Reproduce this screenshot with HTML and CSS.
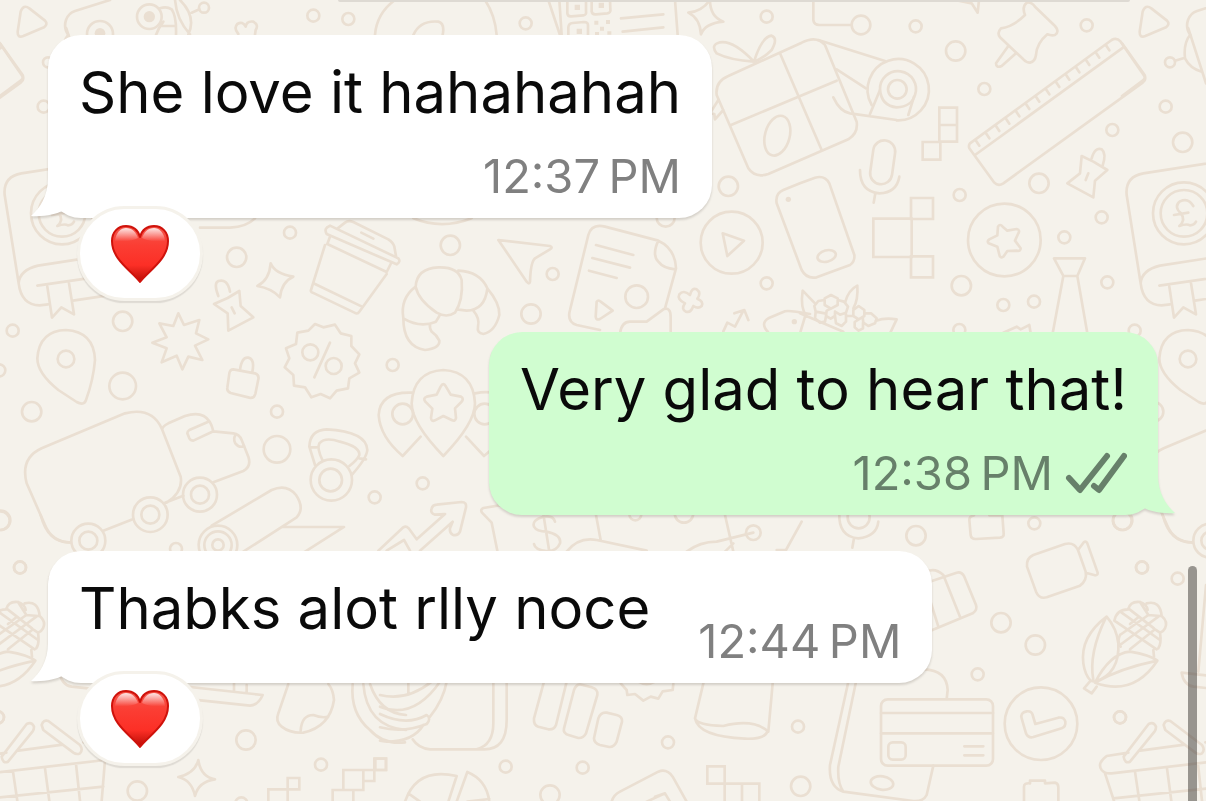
FILE: index.html
```html
<!DOCTYPE html>
<html lang="en">
<head>
<meta charset="utf-8">
<meta name="viewport" content="width=device-width, initial-scale=1">
<title>Chat</title>
<link rel="stylesheet" href="styles.css">
</head>
<body>
<svg class="wallpaper" viewBox="0 0 1206 801" preserveAspectRatio="xMinYMin slice" aria-hidden="true">
  <defs>
    <g id="doodles">
      <!-- top left -->
      <g transform="scale(.33333)">
        <path d="M62 35Q70 12 88 25L135 62Q145 72 132 82L70 108Q52 115 53 95Z"/>
        <path d="M205 105Q190 85 198 60Q205 40 225 33L330 0M0 130L68 225Q72 235 62 242L0 288"/>
        <circle cx="300" cy="102" r="39"/><circle class="dot" cx="300" cy="100" r="16"/>
        <circle cx="448" cy="50" r="37"/><circle class="dot" cx="448" cy="50" r="17"/>
        <path d="M480 25Q500 18 515 28Q530 50 528 105M482 78H525M468 105Q475 85 490 65M525 0Q530 60 570 103M540 0Q590 50 565 103M575 38L598 28"/>
        <circle cx="612" cy="23" r="15"/>
        <path d="M715 102Q700 85 712 72Q728 62 737 80Q740 62 760 65Q777 75 767 90L765 104"/>
        <circle cx="940" cy="47" r="18"/><circle cx="1045" cy="57" r="18"/>
        <circle cx="144" cy="187" r="15"/><circle cx="131" cy="320" r="18"/><circle cx="182" cy="427" r="29"/>
        <path d="M1125 105Q1130 40 1185 0M159 182L189 173M204 105Q184 130 189 175Q204 205 239 215M199 85L252 250M600 683H690Q740 680 765 655"/>
        <circle cx="870" cy="698" r="18"/><circle cx="710" cy="772" r="29"/>
        <path d="M812 790Q825 822 880 830Q845 845 840 892Q815 865 772 858Q808 840 812 790Z"/>
      </g>
      <!-- top middle -->
      <g transform="translate(400) scale(.33333)">
        <path d="M40 105Q60 60 115 65Q135 70 128 105M255 0Q285 45 290 105M445 0L480 105M478 0L485 105M663 55L790 43M668 95L790 82M825 0L833 105"/>
        <path d="M502 0V40Q503 50 514 49L550 46Q560 45 558 33V0M575 0V34Q576 44 588 43L622 40Q633 38 631 28L630 0M505 105V82Q506 70 518 69L552 66Q565 66 564 78V105"/>
        <path class="dot" d="M524 14h16v16h-16zM596 8h16v16h-16zM530 86h16v16h-16zM583 62h12v12h-12zM618 60h12v12h-12zM600 80h12v12h-12zM585 96h12v10h-12zM622 94h12v10h-12z"/>
        <path d="M930 0Q930 50 970 65Q915 70 903 103Q900 55 865 38Q905 35 930 0Z"/>
        <circle cx="377" cy="70" r="18"/><circle cx="1100" cy="50" r="18"/>
        <path d="M1062 185Q1000 120 960 127Q930 135 950 160Q990 180 1062 185Q1085 110 1115 107Q1135 115 1115 150Q1090 175 1062 185Z"/>
        <path d="M1045 505L950 285Q945 245 985 228L1205 128Q1250 105 1275 135L1370 365Q1375 400 1345 418L1105 522Q1065 535 1045 505ZM993 375L1310 242M1140 160L1265 450M955 300L930 340L943 342L945 358L970 330"/>
        <ellipse cx="1132" cy="407" rx="37" ry="61" transform="rotate(15 1132 407)"/>
        <circle cx="985" cy="559" r="29"/><circle cx="151" cy="736" r="29"/><circle cx="458" cy="822" r="18"/>
        <circle cx="393" cy="942" r="29"/><circle cx="1100" cy="850" r="18"/><circle cx="797" cy="653" r="27"/>
        <circle cx="995" cy="728" r="93"/><path d="M968 700L1032 722L982 768Z"/>
        <path d="M295 720L450 738Q460 742 450 748L405 775Q392 785 390 845Q388 855 380 845Z"/>
        <path d="M40 655Q125 690 215 655"/>
        <path d="M600 990L530 975Q500 965 510 930L565 705Q575 670 615 680L775 722Q825 745 828 805L795 925M775 722Q755 765 775 785Q790 805 825 808M588 735L700 765M577 774L690 803M567 812L650 834"/>
        <circle cx="710" cy="890" r="34"/><path d="M590 905Q595 898 602 905L638 932L600 957Q588 962 587 950Z"/>
        <path d="M660 1000Q665 965 690 965H740L790 928Q812 920 812 950V1000"/>
        <path d="M870 885Q875 862 890 868Q905 878 892 896Q912 905 905 918Q895 928 880 918Q872 940 858 935Q842 928 855 910Q830 898 838 883Q850 868 870 885Z"/>
        <path d="M970 994L982 968L1005 980L1030 932M1003 940L1033 930L1045 960M1104 996Q1080 970 1105 955L1155 934Q1165 930 1230 942"/>
        <circle class="dot" cx="1183" cy="965" r="8"/>
      </g>
      <!-- top right -->
      <g transform="translate(800) scale(.33333)">
        <path d="M40 0V60Q42 75 58 75H155M55 120L255 183M110 208L198 265M100 292Q120 335 150 340L290 360M240 270L210 342M342 290L325 345"/>
        <path d="M215 315A92 92 0 1 1 290 361"/><path d="M240 270A54 54 0 1 1 345 285Q335 320 290 322Q245 318 240 270Z"/><circle cx="292" cy="268" r="28"/>
        <circle cx="183" cy="75" r="28"/><circle cx="347" cy="79" r="18"/><circle cx="467" cy="153" r="29"/>
        <circle cx="553" cy="267" r="18"/><circle cx="860" cy="76" r="18"/><path d="M465 0L515 10L533 38L537 0"/>
        <path d="M675 45Q665 20 680 8Q695 5 705 20L765 78Q780 95 765 105Q755 108 742 103Q710 130 708 165Q705 185 690 188Q680 188 670 178L600 112Q590 98 603 85Q640 80 675 45ZM625 138L588 190Q588 205 605 198L648 160"/>
        <path d="M510 430L935 120Q950 112 962 125L1033 228Q1040 240 1028 248L610 550Q595 560 583 548L508 445Q505 437 510 430ZM525 465L970 142"/>
        <path d="M528 422l10 15m20-37l10 15m20-37l10 15m20-37l10 15m20-37l10 15m20-37l10 15m20-37l10 15m20-37l10 15m20-37l10 15m20-37l10 15m20-37l10 15m20-37l10 15m20-37l10 15m20-37l10 15"/>
        <path class="sharp" d="M418 323h53v102h-53zM418 375h53M368 426h53v53h-53zM333 594h66v63h-66zM220 656h115v115h-115zM333 769h66v63h-66z"/>
        <rect x="215" y="421" width="66" height="132" rx="33" transform="rotate(8 248 487)"/>
        <path d="M180 510Q180 575 238 580Q290 578 298 530M226 580L221 608"/>
        <path d="M0 550L45 533Q75 525 88 550L163 765Q165 785 150 795L50 832Q20 838 5 810L-70 610Q-75 580 -50 570Z"/>
        <ellipse cx="80" cy="768" rx="28" ry="17" transform="rotate(-15 80 768)"/><circle class="dot" cx="-35" cy="598" r="8"/>
        <circle cx="613" cy="720" r="109"/>
        <path d="M594 680Q600 670 608 680L622 692L650 687Q662 690 654 702L645 722L662 745Q662 755 650 752L622 753L610 770Q600 776 598 764L592 740L566 730Q560 724 568 718L592 706Z"/>
        <circle cx="479" cy="585" r="18"/><circle cx="717" cy="550" r="29"/><circle cx="937" cy="390" r="18"/>
        <circle cx="905" cy="652" r="18"/><circle cx="793" cy="712" r="18"/><circle cx="922" cy="847" r="18"/>
        <circle cx="484" cy="857" r="29"/><circle cx="610" cy="915" r="18"/><circle cx="702" cy="905" r="18"/><circle cx="478" cy="990" r="18"/>
        <path d="M845 468L880 485L922 510L885 542L880 592L802 550L840 520ZM875 475Q885 440 905 448Q920 460 908 497M865 520L857 540"/>
        <path d="M762 775H855L832 828H790ZM790 828L758 1000M832 828L862 1000M610 998L650 980L662 988L688 975L692 1000"/>
        <!-- flowers -->
        <path d="M45 910L8 872Q0 925 20 950M135 908Q145 870 172 857Q175 900 160 925M228 962Q255 952 290 958L270 1000M0 940L130 995M15 950L0 1000"/>
        <path d="M93 885L113 895V915L93 926L74 915V895ZM74 900L55 903L43 918L47 935L75 940M113 900L132 905L144 920L138 938L120 944L105 935M93 926L80 932L78 948L92 956L105 948V935M47 935L45 955L60 968L75 965L78 948M105 948L108 970L125 978L138 965V942M176 918L193 930V948L176 958L160 948V930ZM138 948L160 948M193 940L213 940L230 955L225 970L205 978L190 968L188 952M176 958L164 966V982L176 992L189 985V968"/>
        <!-- ledger -->
        <path d="M1290 480L1030 520Q975 530 980 585L1022 850Q1030 915 1085 916L1110 913M1240 772L1080 797Q1025 810 1022 850M1078 857L1290 826M1108 860L1122 953L1150 922L1188 943L1173 850M1185 902L1290 886"/>
        <circle cx="1152" cy="640" r="93"/><circle cx="1152" cy="640" r="70"/>
        <path d="M1180 618Q1165 592 1140 604Q1120 620 1143 640Q1158 660 1138 678Q1160 670 1170 676Q1182 676 1188 665M1122 645L1165 638"/>
      </g>
      <!-- left -->
      <g transform="translate(0 290) scale(.33333)">
        <circle cx="368" cy="94" r="29"/><circle cx="38" cy="122" r="18"/><circle cx="-2" cy="241" r="18"/><circle cx="368" cy="288" r="40"/>
        <circle cx="95" cy="365" r="29"/><circle cx="831" cy="365" r="18"/><circle cx="831" cy="478" r="40"/><circle cx="2" cy="691" r="29"/><circle cx="528" cy="777" r="18"/><circle cx="60" cy="832" r="18"/>
        <path d="M230 336L175 300Q112 250 112 205Q118 122 198 120Q282 125 285 210Q280 270 258 330Q252 348 230 336Z"/><circle cx="198" cy="207" r="25"/>
        <path d="M535 70L552 105L598 90L588 130L625 148L585 167L607 210L565 200L547 238L530 197L485 217L500 175L457 158L500 142L478 100L520 108Z"/>
        <path d="M700 238L765 250Q778 255 775 268L766 312Q762 326 748 323L692 309Q680 304 682 293L688 250Q690 238 700 238ZM720 240Q725 200 745 203Q765 208 757 245"/>
        <path d="M642 42L683 24L718 3L722 48L760 82L685 122L683 70ZM655 18Q640-20 655-27Q682-35 690 5M695 52L704 70"/>
        <path d="M375 370L125 475Q60 505 80 580L135 705Q155 755 212 758M375 370Q455 350 485 415L542 560Q550 605 500 638M310 722L400 687M495 638L550 617M640 577L730 543Q755 530 745 500L725 450Q718 432 700 430L640 424Q625 355 555 378L505 400Q485 410 487 420M640 424L580 452Q572 452 568 445L562 430Q562 424 568 420L625 395"/>
        <path d="M708 433Q698 445 706 460Q718 475 732 468"/>
        <circle cx="600" cy="614" r="51"/><circle cx="600" cy="614" r="27"/><circle cx="451" cy="674" r="52"/><circle cx="451" cy="674" r="27"/><circle cx="265" cy="752" r="51"/><circle cx="265" cy="752" r="27"/>
        <path d="M635 707L815 600Q860 580 888 615Q915 655 890 682L730 785M850 711H1032L900 795"/>
        <circle cx="654" cy="765" r="58"/><circle cx="654" cy="765" r="41"/><circle cx="654" cy="765" r="17"/>
      </g>
      <!-- centre left -->
      <g transform="translate(270 210) scale(.33333)">
        <circle cx="368" cy="465" r="18"/><circle cx="314" cy="862" r="18"/><circle cx="458" cy="820" r="18"/><circle cx="690" cy="443" r="25"/>
        <path d="M180 47L385 145Q393 155 380 163L170 72Q160 55 180 47ZM203 55L225 38Q235 30 250 36L355 88Q370 98 373 110L378 138M274 68L310 86M180 80L172 102L350 186L362 162M165 105L123 240Q121 246 128 248L258 310Q264 312 268 305L350 192M135 222L276 290"/>
        <path d="M437 230Q440 175 505 172Q565 170 575 210Q580 270 555 308Q530 325 500 308Q445 270 437 230ZM437 230Q390 265 400 325Q450 355 498 335L508 318M400 325Q400 410 465 420Q510 415 508 392Q500 375 485 365Q478 355 480 342M565 182Q630 185 652 235Q645 300 590 302L560 298M652 235Q690 280 688 315Q675 365 640 372Q620 370 624 350Q630 325 610 302"/>
        <path d="M135 342L160 352L195 344L212 370L244 378V408L268 433L255 460L268 488L238 505L234 535L200 542L180 565L152 552L124 562L105 532L72 527L70 495L44 472L58 445L48 415L78 402L82 368L115 362Z"/>
        <circle cx="121" cy="427" r="24"/><circle cx="191" cy="468" r="24"/><path d="M180 398L133 502"/>
        <path d="M520 738Q425 640 425 580Q430 485 520 480Q610 485 615 580Q615 640 520 738ZM425 548Q330 545 326 615Q330 680 398 738L452 680M615 550Q710 530 715 615Q715 680 642 738L588 680"/>
        <path d="M512 530Q520 515 528 530L542 554L573 560Q583 566 574 576L555 595L558 624Q556 636 545 630L520 618L495 631Q484 636 483 624L487 596L466 575Q458 564 470 560L500 554Z"/>
        <circle cx="398" cy="612" r="31"/><circle cx="644" cy="612" r="31"/>
        <circle cx="184" cy="810" r="62"/><circle cx="182" cy="810" r="34"/>
        <path d="M135 765L118 710Q120 660 170 658Q290 665 292 720Q290 745 245 795M158 752Q140 715 148 700Q165 680 210 695Q270 710 268 735Q262 750 238 768M120 712L140 712M268 745L288 748"/>
        <path d="M325 1022L400 952Q408 946 416 955L440 988L525 912L495 914Q480 910 485 895Q488 885 500 884L575 876Q590 876 588 892L570 965Q562 980 548 974Q538 968 540 955L548 935L450 1022M350 1022L402 990L420 1022"/>
        <path d="M702 884L640 894Q630 898 636 908L665 938L682 1022"/>
      </g>
      <!-- bottom left -->
      <g transform="translate(0 540) scale(.33333)">
        <path d="M179 398L788 465Q775 495 750 497L215 440Q185 435 179 398ZM252 135L229 395M702 430V452M740 435V456"/>
        <path d="M865 432L835 520Q825 545 845 560Q870 580 910 578Q990 560 1002 480Q1000 450 985 432M902 572Q905 525 940 525Q965 535 985 530"/>
        <circle cx="738" cy="600" r="29"/><circle cx="963" cy="674" r="18"/><circle cx="412" cy="753" r="29"/><circle cx="-6" cy="532" r="18"/><circle cx="724" cy="790" r="18"/>
        <path d="M595 660Q602 710 645 718Q595 725 585 768Q575 720 535 711Q585 700 595 660Z"/>
        <path class="sharp" d="M805 783V748H863V783M863 714h35v34h-35zM1030 690h60v60h-60zM1090 690h33v33h-33zM1123 656h35v34h-35zM998 783V750H1060V783"/>
        <path d="M1058 432Q1050 520 1110 570Q1150 615 1215 607M1090 432Q1100 560 1218 570M1110 432Q1140 520 1218 525"/>
        <!-- basket -->
        <path d="M5 650L80 552Q95 545 102 560Q102 568 98 574L24 665Q8 672 5 650ZM125 555Q130 538 145 543L240 615Q250 630 240 640Q230 645 220 638L130 570ZM55 632L188 614M19 638L-46 648Q-76 670 -61 690Q-51 702 -31 700L315 660L305 783M-51 700L-24 783M39 695L52 783M135 685L148 783M228 672L240 783M-26 775L310 740M250 607L310 598Q330 620 315 660"/>
      </g>
      <!-- bottom centre -->
      <g transform="translate(380 500) scale(.33333)">
        <path d="M525 65Q520 45 490 50Q455 60 462 80Q470 95 500 95Q545 105 540 130Q530 155 500 153Q465 150 462 132M490 42L508 155M648 45L662 120M560 155Q595 110 650 120L800 152M920 155Q960 125 1010 125L1120 98M1035 45L1060 155M1060 130L1035 155M1265 65L1218 150H1190"/>
        <circle cx="1120" cy="98" r="22"/><circle cx="766" cy="43" r="18"/><circle cx="912" cy="40" r="28"/>
        <path d="M0 585Q80 605 155 545M85 545V583M0 620Q100 660 180 545M0 642Q80 680 140 645Q155 655 140 672Q70 700 0 682M130 675Q100 725 20 725L0 722M200 545Q190 600 150 650M340 545V670Q340 735 290 748M380 545V660Q380 750 310 748H150Q115 745 98 718"/>
        <path class="sharp" d="M-14 776h32v34h-32z"/>
        <path d="M492 545L462 655Q460 675 475 680L505 688Q522 690 528 675L560 545M582 570Q590 550 605 554L635 562Q655 568 652 585L618 700Q610 715 595 714L568 706Q548 700 552 685ZM655 655Q662 635 680 638L710 645Q728 650 726 665L710 725Q702 742 688 741L660 735Q642 730 642 715Z"/>
        <path d="M722 550L740 570L742 585L765 582L790 602L812 590L835 596L848 574L878 570L880 552M775 545Q800 560 825 545M970 550L945 655Q950 675 1030 678Q1120 655 1165 695L1178 550M945 655Q955 710 1095 716Q1160 718 1163 690"/>
        <circle cx="864" cy="727" r="18"/><circle cx="377" cy="800" r="18"/><circle cx="608" cy="803" r="18"/><circle cx="510" cy="885" r="29"/>
        <path d="M75 905Q110 800 230 828L205 905M230 905L262 816Q320 840 328 905M85 880L120 905M262 905L328 897M695 905Q700 885 720 875L835 815Q860 805 878 830L920 905M800 905L855 880L870 905M825 890L855 880"/>
        <path class="sharp" d="M982 799h52v52h-52zM1034 851h104v54M1034 851v54M1086 851v54"/>
      </g>
      <!-- bottom right -->
      <g transform="translate(800 500) scale(.33333)">
        <path d="M118 40Q115 110 175 115Q230 110 235 65M162 115L157 143"/><circle cx="176" cy="52" r="33"/>
        <circle cx="348" cy="107" r="29"/><circle cx="703" cy="70" r="18"/><circle cx="967" cy="62" r="28"/>
        <path d="M522 46Q508 48 508 60L512 105Q514 118 528 117L600 113Q612 112 611 100L607 46H568"/>
        <path d="M700 165L795 132Q822 125 834 150L857 215Q862 240 840 257L740 292Q718 298 708 275L681 200Q678 175 700 165ZM834 150L852 126Q858 122 862 130L893 218Q894 226 885 226L857 218"/>
        <circle cx="1026" cy="203" r="18"/><circle cx="1133" cy="236" r="18"/><circle cx="603" cy="368" r="29"/><circle cx="706" cy="435" r="29"/><circle cx="533" cy="523" r="18"/><circle cx="960" cy="652" r="18"/>
        <path d="M380 248L470 218Q485 214 493 230L528 315Q533 330 518 340L390 393M380 215Q405 202 430 225L480 350M390 300L415 380"/>
        <path d="M145 545L90 795Q85 860 130 875L340 903Q370 905 380 885L400 797M168 545L115 800Q112 850 130 875M372 508Q440 510 443 570L440 597"/>
        <rect x="243" y="598" width="336" height="199" rx="20"/><path d="M243 639H579M243 700H579M493 739H550M493 766H550"/><rect x="265" y="727" width="52" height="52" rx="13"/>
        <ellipse cx="246" cy="849" rx="34" ry="20" transform="rotate(8 246 849)"/><circle cx="2" cy="859" r="29"/><circle cx="-6" cy="680" r="18"/>
        <circle cx="723" cy="671" r="109"/><path d="M665 655Q660 638 680 634Q695 632 698 645L706 672L775 653Q792 650 796 665Q798 680 785 685L700 711Q685 715 678 700Z"/>
        <!-- corn -->
        <path d="M920 350Q840 410 850 490Q855 525 872 542L885 545Q960 520 955 430Q950 385 920 350ZM918 352Q865 460 880 540M885 548Q930 460 990 455Q1050 465 1072 482Q1000 590 885 548ZM1072 482Q960 505 885 548M872 542L852 565L875 580L890 560"/>
        <path d="M943 362Q950 328 985 328Q990 303 1020 306Q1040 312 1043 330M1040 310Q1080 300 1085 348Q1105 365 1095 385Q1090 395 1080 398Q1085 430 1075 445M943 362L1070 448M965 338L1080 420M985 325L1062 385M1045 345L960 405M1015 352L990 372M1075 350L1045 372L960 435M1080 398L1065 388L990 448M1020 306L1045 345L1080 348M1060 450L1062 470M960 405Q950 425 962 440"/>
        <path d="M672 903V860Q672 848 690 850V842H735V850L765 848Q775 850 775 862V903M1088 45Q1110 130 1178 127"/>
      </g>
    </g>
    <linearGradient id="heart-fill" x1="0" y1="0" x2="0" y2="1">
      <stop offset="0" stop-color="#f5564b"/><stop offset=".35" stop-color="#fb3d33"/><stop offset=".7" stop-color="#fc2f26"/><stop offset="1" stop-color="#b80b04"/>
    </linearGradient>
    <linearGradient id="heart-shine" x1="0" y1="0" x2="0" y2="1">
      <stop offset="0" stop-color="#fff" stop-opacity=".85"/><stop offset="1" stop-color="#fff" stop-opacity="0"/>
    </linearGradient>
    <symbol id="heart" viewBox="0 0 60 60">
      <path d="M30 58C22 47 2 36 2 17C2 8 8 2 16 2C23 2 28 6 30 13C32 6 37 2 44 2C52 2 58 8 58 17C58 36 38 47 30 58Z" fill="url(#heart-fill)" stroke="#cf120b" stroke-width="2" stroke-linejoin="round"/>
      <path d="M5 17C6 8 11 4 16 4C22 4 26 8 28 14C23 17 12 18 5 17Z" fill="url(#heart-shine)"/>
      <path d="M55 17C54 8 49 4 44 4C38 4 34 8 32 14C37 17 48 18 55 17Z" fill="url(#heart-shine)"/>
    </symbol>
    <symbol id="tail" viewBox="0 0 52 40">
      <path d="M17 0C17 18 9 30 0 38C14 39 25 36 31 33C37 37 43 39 52 39V0Z" fill="currentColor"/>
    </symbol>
  </defs>
  <use href="#doodles"/>
  <use href="#doodles" x="1122"/>
  <use href="#doodles" x="-1122"/>
</svg>

<main class="chat">
  <div class="previous"></div>

  <article class="message incoming">
    <div class="bubble">
      <svg class="tail" aria-hidden="true"><use href="#tail"/></svg>
      <p class="text">She love it hahahahah</p>
      <div class="meta"><time>12:37&#8239;PM</time></div>
    </div>
    <button class="reaction" type="button" aria-label="Heart reaction"><svg class="heart" aria-hidden="true"><use href="#heart"/></svg></button>
  </article>

  <article class="message outgoing">
    <div class="bubble">
      <svg class="tail" aria-hidden="true"><use href="#tail"/></svg>
      <p class="text">Very glad to hear that!</p>
      <div class="meta"><time>12:38&#8239;PM</time>
        <svg class="ticks" viewBox="0 0 62 42" role="img" aria-label="Delivered"><path d="M4 26L15 38L42 4"/><path d="M29 34L34 38L59 4"/></svg>
      </div>
    </div>
  </article>

  <article class="message incoming">
    <div class="bubble inline">
      <svg class="tail" aria-hidden="true"><use href="#tail"/></svg>
      <p class="text">Thabks alot rlly noce</p>
      <div class="meta"><time>12:44&#8239;PM</time></div>
    </div>
    <button class="reaction" type="button" aria-label="Heart reaction"><svg class="heart" aria-hidden="true"><use href="#heart"/></svg></button>
  </article>
</main>
<div class="scrollbar"></div>
</body>
</html>
```
FILE: styles.css
```css
* { box-sizing: border-box; }

body {
  margin: 0;
  min-height: 100vh;
  background: #f5f2eb;
  font-family: Inter, "Liberation Sans", sans-serif;
  color: #0a0a0a;
  overflow: hidden;
}

.wallpaper {
  position: fixed;
  inset: 0;
  width: 100%;
  height: 100%;
  z-index: -1;
  fill: none;
  stroke: #eadfd2;
  stroke-width: 8px;
  stroke-linecap: round;
  stroke-linejoin: round;
}

.wallpaper .dot { fill: #eadfd2; stroke: none; }
.wallpaper .sharp { stroke-linejoin: miter; }

.chat {
  display: flex;
  flex-direction: column;
  gap: 36px;
  padding: 0 48px;
}

.previous {
  height: 2px;
  margin: 0 28px -3px 290px;
  background: #dedad3;
  border-radius: 0 0 24px 24px;
}

.message {
  display: flex;
  flex-direction: column;
  align-items: flex-start;
}

.outgoing { align-items: flex-end; }

.bubble {
  position: relative;
  display: flex;
  flex-direction: column;
  padding: 19px 31px 14px;
  border-radius: 33px;
  background: #fff;
  color: #fff;
  filter: drop-shadow(0 2px 1px rgba(60, 50, 40, .18));
}

.outgoing .bubble {
  background: #d0fdd0;
  color: #d0fdd0;
}

.bubble.inline {
  flex-direction: row;
  align-items: flex-end;
  gap: 48px;
}

.tail {
  position: absolute;
  left: -17px;
  bottom: 0;
  width: 52px;
  height: 40px;
}

.outgoing .tail {
  left: auto;
  right: -17px;
  transform: scaleX(-1);
}

.text {
  margin: 0 0 18px;
  font-size: 58px;
  line-height: 76px;
  color: #0a0a0a;
  white-space: nowrap;
}

.inline .text { margin-bottom: 23px; }

.meta {
  display: flex;
  justify-content: flex-end;
  align-items: center;
  gap: 12px;
  font-size: 47px;
  line-height: 56px;
  color: #808080;
  white-space: nowrap;
}

.outgoing .meta { color: #67806a; }

.ticks {
  width: 62px;
  height: 42px;
  fill: none;
  stroke: currentColor;
  stroke-width: 6px;
  stroke-linecap: round;
  stroke-linejoin: round;
}

.reaction {
  position: relative;
  display: flex;
  align-items: center;
  justify-content: center;
  width: 126px;
  height: 95px;
  margin: -12px 0 -5px 29px;
  padding: 0;
  border: 3px solid #f5f2eb;
  border-radius: 48px;
  background: #fff;
  box-shadow: 0 2px 1px rgba(60, 50, 40, .12);
}

.heart { width: 60px; height: 60px; }

.scrollbar {
  position: fixed;
  top: 566px;
  right: 9px;
  bottom: -9px;
  width: 9px;
  border-radius: 5px;
  background: rgba(60, 56, 52, .5);
}
```
